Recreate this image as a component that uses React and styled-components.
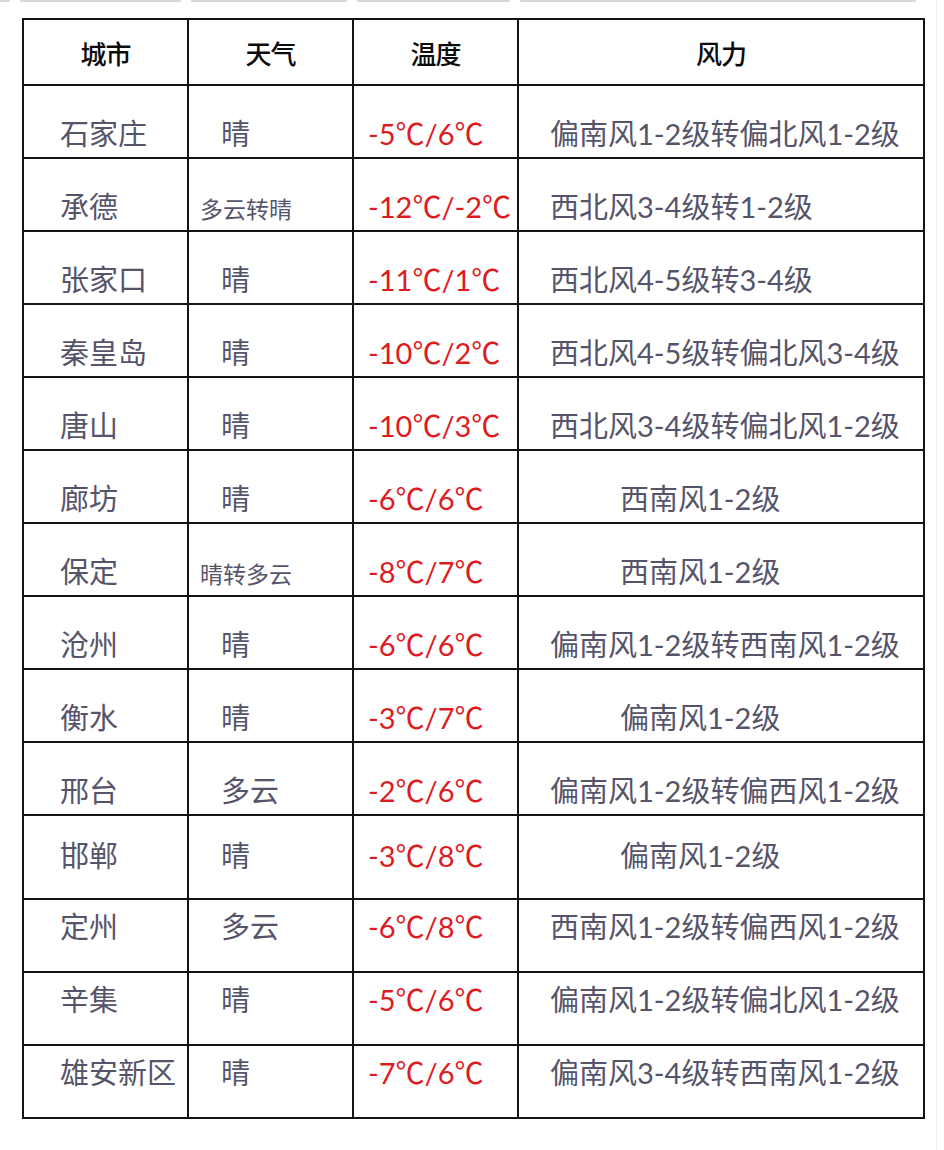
import React from "react";
import styled, { createGlobalStyle } from "styled-components";

const GlobalStyle = createGlobalStyle`
  html, body { margin: 0; padding: 0; background: #ffffff; }
  body { font-family: Lato, "Noto Sans CJK SC", sans-serif; }
`;

const Page = styled.div`
  width: 944px;
  height: 1150px;
  position: relative;
  overflow: hidden;
  background: #fff;
`;

const TopStrip = styled.div`
  display: flex;
  gap: 10px;
  height: 2px;
  padding: 0 28px 0 0;
`;

const StripSeg = styled.div`
  height: 2px;
  background: #d6d6dc;
  border-radius: 1px;
  flex: ${(p) => p.$w} 0 0;
`;

const RightEdge = styled.div`
  position: absolute;
  top: 0;
  right: 7px;
  width: 1px;
  height: 100%;
  background: #ececf0;
`;

const Table = styled.table`
  margin: 16px 0 0 22px;
  width: 901px;
  border-collapse: collapse;
  table-layout: fixed;
`;

const Col = styled.col`
  width: ${(p) => p.$w}px;
`;

const HeadCell = styled.th`
  height: 64px;
  border: 2px solid #141414;
  padding: 0;
  font-family: "Noto Sans CJK SC", sans-serif;
  font-weight: 500;
  font-size: 26px;
  color: #0c0c0c;
  text-align: center;
  vertical-align: middle;
  letter-spacing: -1px;
`;

const Row = styled.tr`
  height: ${(p) => p.$h}px;
`;

const Cell = styled.td`
  border: 2px solid #141414;
  padding: ${(p) => p.$top}px 0 0 ${(p) => p.$left}px;
  vertical-align: top;
  white-space: nowrap;
  font-size: 29px;
  line-height: 29px;
  color: ${(p) => (p.$red ? "#dd1c1f" : "#56546a")};
  font-family: Lato, "Noto Sans CJK SC", sans-serif;
`;

const Small = styled.span`
  display: inline-block;
  font-size: 23px;
  padding-top: 2px;
`;

const rows = [
  ["石家庄", "晴", "-5℃/6℃", "偏南风1-2级转偏北风1-2级"],
  ["承德", "多云转晴", "-12℃/-2℃", "西北风3-4级转1-2级"],
  ["张家口", "晴", "-11℃/1℃", "西北风4-5级转3-4级"],
  ["秦皇岛", "晴", "-10℃/2℃", "西北风4-5级转偏北风3-4级"],
  ["唐山", "晴", "-10℃/3℃", "西北风3-4级转偏北风1-2级"],
  ["廊坊", "晴", "-6℃/6℃", "西南风1-2级"],
  ["保定", "晴转多云", "-8℃/7℃", "西南风1-2级"],
  ["沧州", "晴", "-6℃/6℃", "偏南风1-2级转西南风1-2级"],
  ["衡水", "晴", "-3℃/7℃", "偏南风1-2级"],
  ["邢台", "多云", "-2℃/6℃", "偏南风1-2级转偏西风1-2级"],
  ["邯郸", "晴", "-3℃/8℃", "偏南风1-2级"],
  ["定州", "多云", "-6℃/8℃", "西南风1-2级转偏西风1-2级"],
  ["辛集", "晴", "-5℃/6℃", "偏南风1-2级转偏北风1-2级"],
  ["雄安新区", "晴", "-7℃/6℃", "偏南风3-4级转西南风1-2级"],
];

const rowHeight = (i) => (i === 10 ? 84 : 73);
const rowTop = (i) => {
  if (i <= 9) return 33;
  if (i === 10) return 25;
  return 12;
};

export default function App() {
  return (
    <Page>
      <GlobalStyle />
      <TopStrip>
        <StripSeg $w={10} />
        <StripSeg $w={160} />
        <StripSeg $w={154} />
        <StripSeg $w={152} />
        <StripSeg $w={393} />
      </TopStrip>
      <RightEdge />
      <Table>
        <colgroup>
          <Col $w={165} />
          <Col $w={165} />
          <Col $w={165} />
          <Col $w={406} />
        </colgroup>
        <thead>
          <tr>
            <HeadCell>城市</HeadCell>
            <HeadCell>天气</HeadCell>
            <HeadCell>温度</HeadCell>
            <HeadCell>风力</HeadCell>
          </tr>
        </thead>
        <tbody>
          {rows.map((r, i) => {
            const top = rowTop(i);
            const longWeather = r[1].length > 2;
            const shortWind = r[3].length <= 7;
            return (
              <Row key={r[0]} $h={rowHeight(i)}>
                <Cell $top={top} $left={36}>{r[0]}</Cell>
                <Cell $top={top} $left={longWeather ? 11 : 32}>
                  {longWeather ? <Small>{r[1]}</Small> : r[1]}
                </Cell>
                <Cell $top={top} $left={14} $red>{r[2]}</Cell>
                <Cell $top={top} $left={shortWind ? 101 : 31}>{r[3]}</Cell>
              </Row>
            );
          })}
        </tbody>
      </Table>
    </Page>
  );
}
